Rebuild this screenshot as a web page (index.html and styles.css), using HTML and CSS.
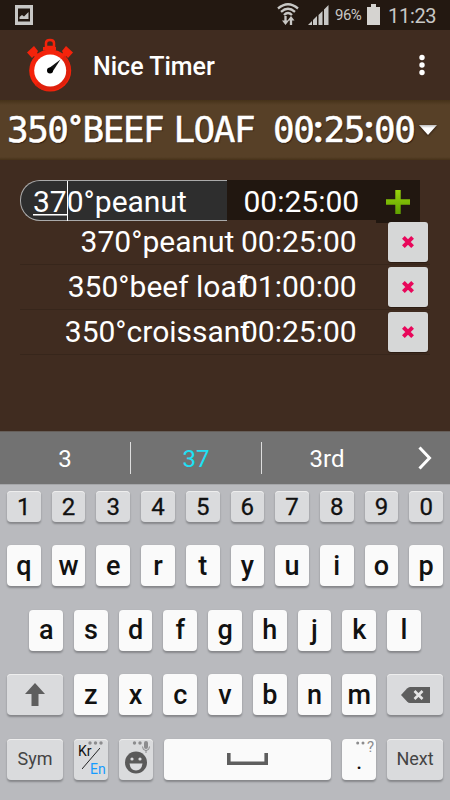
FILE: index.html
```html
<!DOCTYPE html>
<html lang="en">
<head>
<meta charset="utf-8">
<title>Nice Timer</title>
<link rel="stylesheet" href="styles.css">
</head>
<body>
<div class="status">
  <svg class="s-img" width="18" height="20" viewBox="0 0 18 20"><path fill="#c8c7c5" fill-rule="evenodd" d="M0 0h18v20H0zM3 3.500v13h12v-13z"/><path fill="#c8c7c5" d="M4.500 14v-2l2.500-2 2 1.500L13.500 7v7z"/></svg>
  <svg class="s-wifi" width="22" height="23" viewBox="0 0 22 23"><g fill="none" stroke="#c8c7c5" stroke-width="2.300"><path d="M1 5.500Q11-3 21 5.500M4 8.800Q11 2.800 18 8.800M7 12Q11 8 15 12"/><path d="M8.500 13v6M14 16v6"/></g><path fill="#c8c7c5" d="M5 17.500h7l-3.500 4.500zM10.500 17.500h7L14 13z"/></svg>
  <svg class="s-signal" width="21" height="20" viewBox="0 0 21 20"><path fill="#c8c7c5" d="M0 20l4-4v4zM5 20v-5l4-4v9zM10.500 20V10l4-4v14zM16 20V4.500L20.500 0v20z"/></svg>
  <span class="pct">96%</span>
  <svg class="s-bat" width="13" height="21" viewBox="0 0 13 21"><path fill="#d5d3d0" d="M4 0h5v3h4v18H0V3h4z"/></svg>
  <span class="clock">11:23</span>
</div>
<header class="appbar">
  <svg class="logo" width="48" height="54" viewBox="0 0 48 54">
    <g fill="#f4230b"><path fill="none" stroke="#f4230b" stroke-width="2.500" d="M20 9V5q0-3 4-3t4 3v4z"/><path d="M17 9h13v3.500H17zM1 14.500L8 8l4 5-1 2 4 3-4 3-3-3-2 2z"/><path d="M47 14.500L40 8l-4 5 1 2-4 3 4 3 3-3 2 2z"/><circle cx="24.200" cy="32.500" r="21"/></g>
    <path fill="#df200c" d="M38.800 17.500A21 21 0 0 1 9.400 47.400z"/>
    <circle cx="24.200" cy="32.500" r="16" fill="#fff"/>
    <path fill="#111" d="M34.500 21.500L22.500 30.500 26 34.500z"/><circle cx="24" cy="32.500" r="3"/>
  </svg>
  <h1>Nice Timer</h1>
  <svg class="more" width="6" height="22" viewBox="0 0 6 22"><g fill="#fff"><circle cx="3" cy="3.500" r="2.700"/><circle cx="3" cy="11" r="2.700"/><circle cx="3" cy="18.500" r="2.700"/></g></svg>
</header>
<div class="lcd">
  <span class="lcd-name">350<span class="deg">°</span>BEEF LOAF</span>
  <span class="lcd-time">00<span class="colon">:</span>25<span class="colon">:</span>00</span>
  <svg class="caret" width="18" height="11" viewBox="0 0 18 11"><defs><linearGradient id="tri" x2="0" y2="1"><stop stop-color="#bbb"/><stop offset=".3" stop-color="#fff"/></linearGradient></defs><path fill="url(#tri)" d="M0 0h18L9 10z"/></svg>
</div>
<main>
  <div class="entry">
    <div class="field"><span class="typed">37</span>0°peanut</div>
    <div class="entry-time">00:25:00</div>
    <div class="add"><svg width="24" height="24" viewBox="0 0 24 24"><defs><linearGradient id="plus" x2="0" y2="1"><stop stop-color="#98d40c"/><stop offset="1" stop-color="#5fa000"/></linearGradient></defs><path fill="url(#plus)" d="M9.300 0h5.400v9.300H24v5.400h-9.300V24H9.300v-9.300H0V9.300h9.300z"/></svg></div>
  </div>
  <div class="row"><span class="name">370°peanut</span><span class="time">00:25:00</span><button class="del"><svg width="12" height="12" viewBox="0 0 12 12"><path stroke="#e8075a" stroke-width="3.900" d="M1.400 1.400l9.200 9.200M10.600 1.400l-9.200 9.200"/></svg></button></div>
  <div class="row"><span class="name">350°beef loaf</span><span class="time">01:00:00</span><button class="del"><svg width="12" height="12" viewBox="0 0 12 12"><path stroke="#e8075a" stroke-width="3.900" d="M1.400 1.400l9.200 9.200M10.600 1.400l-9.200 9.200"/></svg></button></div>
  <div class="row"><span class="name">350°croissant</span><span class="time">00:25:00</span><button class="del"><svg width="12" height="12" viewBox="0 0 12 12"><path stroke="#e8075a" stroke-width="3.900" d="M1.400 1.400l9.200 9.200M10.600 1.400l-9.200 9.200"/></svg></button></div>
</main>
<div class="suggest">
  <span>3</span><i></i><span class="on">37</span><i></i><span>3rd</span>
  <svg width="14" height="24" viewBox="0 0 14 24"><path fill="none" stroke="#fff" stroke-width="3" d="M1.500 1.500L11.500 12l-10 10.500"/></svg>
</div>
<div class="kbd">
  <div class="keys nums"><b>1</b><b>2</b><b>3</b><b>4</b><b>5</b><b>6</b><b>7</b><b>8</b><b>9</b><b>0</b></div>
  <div class="keys"><b>q</b><b>w</b><b>e</b><b>r</b><b>t</b><b>y</b><b>u</b><b>i</b><b>o</b><b>p</b></div>
  <div class="keys home"><b>a</b><b>s</b><b>d</b><b>f</b><b>g</b><b>h</b><b>j</b><b>k</b><b>l</b></div>
  <div class="keys">
    <b class="gray wide"><svg width="20" height="23" viewBox="0 0 20 23"><path fill="#5e5e5e" d="M10 0l10 11h-6.500v12h-7V11H0z"/></svg></b>
    <b>z</b><b>x</b><b>c</b><b>v</b><b>b</b><b>n</b><b>m</b>
    <b class="gray wide"><svg width="29" height="16" viewBox="0 0 29 16"><path fill="#5e5e5e" d="M0 8l6-6.500Q7.500 0 9 0h20v16H9q-1.500 0-3-1.500z"/><path stroke="#e4e4e4" stroke-width="2.600" d="M13.500 4l8 8M21.500 4l-8 8"/></svg></b>
  </div>
  <div class="keys">
    <b class="gray wide small">Sym</b>
    <b class="gray lang"><svg class="dots" width="15" height="4" viewBox="0 0 15 4"><g fill="#8c8c8e"><circle cx="2" cy="2" r="1.700"/><circle cx="7.500" cy="2" r="1.700"/><circle cx="13" cy="2" r="1.700"/></g></svg><svg class="slash" width="18" height="21" viewBox="0 0 18 21"><path stroke="#222" d="M0 21L18 0"/></svg><span class="kr">Kr</span><span class="en">En</span></b>
    <b class="gray"><svg width="34" height="41" viewBox="0 0 34 41"><g fill="#8c8c8e"><circle cx="15.500" cy="4" r="1.700"/><circle cx="21" cy="4" r="1.700"/><rect x="25" y="2" width="4" height="8" rx="2"/></g><path fill="none" stroke="#8c8c8e" d="M23.500 7.500q0 4 3.500 4t3.500-4M27 11v3"/><circle cx="17" cy="23.500" r="11" fill="#5a5a5a"/><g fill="#dcdde0"><circle cx="13" cy="20" r="1.600"/><circle cx="21" cy="20" r="1.600"/><path d="M10.500 24.500h13q-1 7-6.500 7t-6.500-7z"/></g></svg></b>
    <b class="space"><svg width="41" height="12" viewBox="0 0 41 12"><path fill="none" stroke="#5e5e5e" stroke-width="3.600" d="M1.800 0v10.200h37.400V0"/></svg></b>
    <b class="period"><span class="q"><svg width="9" height="4" viewBox="0 0 9 4"><g fill="#8c8c8e"><circle cx="1.700" cy="2" r="1.500"/><circle cx="7" cy="2" r="1.500"/></g></svg>?</span><span class="dot">.</span></b>
    <b class="gray wide small">Next</b>
  </div>
</div>
</body>
</html>
```
FILE: styles.css
```css
* { box-sizing: border-box; }
body { margin: 0; width: 450px; height: 800px; overflow: hidden; background: #402c20; color: #fff; font-family: Roboto, "Liberation Sans", sans-serif; }
svg { display: block; flex: none; }
.status { height: 30px; background: #231811; display: flex; align-items: flex-start; color: #c8c7c5; }
.s-img { margin: 5px 0 0 15px; }
.s-wifi { margin: 3px 0 0 244px; }
.s-signal { margin: 5px 0 0 9px; }
.pct { width: 30px; margin: 6px 0 0 6px; font-size: 15px; line-height: 19px; letter-spacing: -.5px; }
.s-bat { margin: 4px 0 0 2px; }
.clock { margin: 4px 0 0 8px; font-size: 20px; line-height: 24px; letter-spacing: -.3px; white-space: nowrap; }
.appbar { height: 70px; display: flex; align-items: flex-start; }
.logo { margin: 8px 0 0 26px; }
h1 { margin: 21px 0 0 19px; font-size: 25px; line-height: 31px; font-weight: 500; white-space: nowrap; width: 300px; }
.more { margin: 24px 0 0 26px; }
.lcd { height: 60px; background: linear-gradient(#463219, #574027 5px, #574027 57px, #463219); display: flex; font-family: "DejaVu Sans Mono", monospace; font-size: 36px; line-height: 60px; letter-spacing: -1.500px; text-shadow: 1px 1px 1px #2b1b10; white-space: nowrap; -webkit-text-stroke: .5px #fff; }
.lcd-name { width: 266px; padding-left: 7px; word-spacing: -10px; }
.deg, .colon { font-family: Roboto, sans-serif; font-weight: 700; letter-spacing: 0; }
.deg { padding-left: 1px; }
.lcd-time { width: 154px; padding-left: 7px; }
.caret { margin: 25px 0 0 -1px; filter: drop-shadow(0 1px 1px #2b1b10); }
main { height: 271px; padding: 20px 20px 0; font-size: 30px; line-height: 40px; white-space: nowrap; }
.entry { height: 40px; display: flex; }
.field { width: 207px; height: 41px; border: 1px solid #aaa; border-right: 0; border-radius: 20px 0 0 20px; background: #2e2e2e; padding-left: 12px; line-height: 42px; }
.typed { display: inline-block; height: 40px; border-right: 1.500px solid #fff; vertical-align: top; background: linear-gradient(#fff, #fff) 0 33px / 100% 1.500px no-repeat; margin-right: -1px; }
.entry-time { width: 149px; height: 40px; background: #211710; padding-left: 16.500px; line-height: 43px; }
.add { width: 44px; height: 43px; background: #211710; padding: 10px 0 0 10px; }
.row { height: 45px; display: flex; border-bottom: 1px solid #37261b; }
.name { width: 220px; margin: 2px 0 0 27.500px; text-align: center; }
.time { width: 121px; margin: 2px 0 0 -26.500px; }
.del { width: 40px; height: 40px; margin: 2px 0 0 26px; padding: 0; flex: none; border: 0; border-radius: 3px; background: #d6d7d7; display: flex; align-items: center; justify-content: center; box-shadow: 0 1px 1px #2a1b12; }
.suggest { height: 53px; background: #727272; border-top: 1px solid #665f5a; display: flex; align-items: center; font-size: 24px; }
.suggest span { width: 130px; text-align: center; padding-top: 2px; }
.suggest i { width: 1px; height: 32px; background: #ddd; }
.suggest .on { color: #1ee0f5; }
.suggest svg { margin-left: 26px; }
.kbd { height: 316px; background: #b9babe; border-top: 1px solid #a5a6a9; padding: 6px 7px 0; color: #111; }
.keys { display: flex; gap: 11px; height: 41px; margin-bottom: 23.400px; }
.nums { height: 31px; }
.home { padding: 0 22.300px; }
.keys b { flex: 1 1 0; min-width: 0; display: flex; align-items: center; justify-content: center; font-weight: 500; font-size: 27px; line-height: 32px; background: #fafafa; border-radius: 4px; box-shadow: 0 1.500px 2px #85868a; }
.nums b, .keys .gray { background: #dadbdd; box-shadow: 0 1.500px 2px #85868a, inset 0 1px #eee; }
.nums b { font-size: 24px; font-weight: 400; -webkit-text-stroke: .3px #111; }
.keys .wide { flex: 0 0 55.900px; }
.keys .small { font-size: 18px; font-weight: 400; color: #444; }
.keys .space { flex: 0 0 167.500px; }
.keys .lang { position: relative; font-size: 14px; font-weight: 400; line-height: 16px; }
.dots { position: absolute; right: 5px; top: 2px; }
.slash { position: absolute; left: 8px; top: 9px; }
.kr { position: absolute; left: 4px; top: 4px; }
.en { position: absolute; right: 2px; bottom: 3px; color: #159bff; }
.keys .period { position: relative; font-size: 24px; font-weight: 400; }
.q { position: absolute; right: 2px; top: 1px; display: flex; gap: 2px; font-size: 15px; line-height: 15px; color: #8c8c8e; }
.q svg { margin-top: 1px; }
.dot { padding-top: 3px; }
```
